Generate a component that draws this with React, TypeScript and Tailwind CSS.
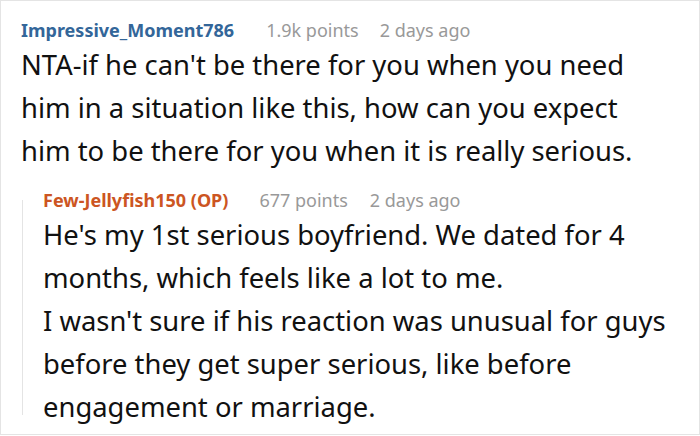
export default function App() {
  return (
    <div className="w-[700px] h-[436px] bg-white overflow-hidden" style={{ fontFamily: '"Noto Sans", sans-serif' }}>
      <div className="h-[435px] border border-[#e4e4e4] pl-[20px] pr-4 pt-[17px]">
        <div className="flex items-baseline text-[18px] leading-[24px]">
          <span className="font-bold text-[#336699]">Impressive_Moment786</span>
          <span className="ml-[32px] text-[#999999]">1.9k points</span>
          <span className="ml-[21px] text-[#999999]">2 days ago</span>
        </div>
        <p className="mt-[1px] text-[27.4px] leading-[43px] text-[#111111]">
          NTA-if he can't be there for you when you need
          <br />
          him in a situation like this, how can you expect
          <br />
          him to be there for you when it is really serious.
        </p>
        <div className="mt-[16px] flex">
          <div className="ml-[1px] mt-[12px] w-px h-[215px] bg-[#e4e4e4]" />
          <div className="pl-[20px]">
            <div className="flex items-baseline text-[18px] leading-[24px]">
              <span className="font-bold text-[#cc5522]">Few-Jellyfish150 (OP)</span>
              <span className="ml-[31px] text-[#999999]">677 points</span>
              <span className="ml-[22px] text-[#999999]">2 days ago</span>
            </div>
            <p className="mt-[1px] text-[27.4px] leading-[43px] text-[#111111]">
              He's my 1st serious boyfriend. We dated for 4
              <br />
              months, which feels like a lot to me.
              <br />
              I wasn't sure if his reaction was unusual for guys
              <br />
              before they get super serious, like before
              <br />
              engagement or marriage.
            </p>
          </div>
        </div>
      </div>
    </div>
  );
}
